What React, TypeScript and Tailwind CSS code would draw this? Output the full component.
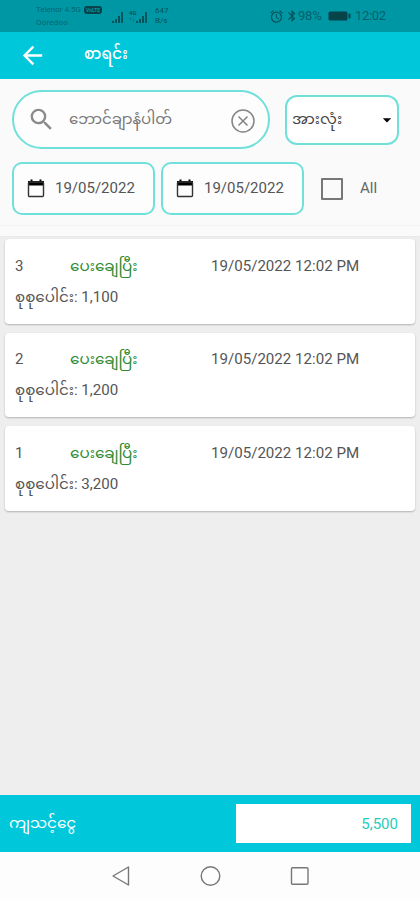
import { useState } from "react";
import {
  MdAlarm,
  MdArrowBack,
  MdArrowDropDown,
  MdBluetooth,
  MdSearch,
} from "react-icons/md";

const vouchers = [
  { id: 3, status: "ပေးချေပြီး", date: "19/05/2022 12:02 PM", total: "1,100" },
  { id: 2, status: "ပေးချေပြီး", date: "19/05/2022 12:02 PM", total: "1,200" },
  { id: 1, status: "ပေးချေပြီး", date: "19/05/2022 12:02 PM", total: "3,200" },
];

const Signal = () => (
  <svg width="12" height="12" viewBox="0 0 12 12" fill="currentColor" className="mt-[2px]">
    <path d="M0 10h2v2H0zM3 8h2v4H3zM6 5h2v7H6zM9 1h2v11H9z" />
  </svg>
);

const CalendarIcon = () => (
  <svg width="18" height="19" viewBox="0 0 18 19">
    <path d="M1 2h16v4.500H1zM3.500 0.500h2v3h-2zM12.500 0.500h2v3h-2z" fill="#000" />
    <rect
      x="1.5"
      y="3"
      width="15"
      height="14.5"
      rx="1"
      fill="none"
      stroke="#333"
      strokeWidth="1.4"
    />
  </svg>
);

const StatusBar = () => (
  <div className="flex h-8 shrink-0 items-center bg-[#0097a5] text-[#07535b]">
    <div className="ml-[36px] w-[76px] text-[8px] leading-[13px]">
      <div className="flex items-center gap-px whitespace-nowrap">
        <span className="w-[47px] opacity-70">Telenor 4.5G</span>
        <span className="rounded-[3px] bg-[#07434a] px-[2px] text-[5px] leading-[8px] font-bold text-[#0097a5]">
          VoLTE
        </span>
      </div>
      <div className="tracking-[0.2px] opacity-70">Ooredoo</div>
    </div>
    <Signal />
    <div className="ml-[5px] w-[7px] text-[6px] leading-[6px] font-bold">
      <div>4G</div>
      <div>↑↓</div>
    </div>
    <Signal />
    <div className="ml-[7px] w-[115px] text-[8px] leading-[10px]">
      <div>647</div>
      <div>B/s</div>
    </div>
    <MdAlarm size={15} className="-ml-px" />
    <MdBluetooth size={14} className="ml-px" />
    <span className="-ml-px w-[28px] text-[13px] tracking-[-0.2px] opacity-80">98%</span>
    <svg className="ml-[2px]" width="23" height="10" viewBox="0 0 23 10">
      <rect x="0.5" y="0.5" width="19" height="9" rx="1.5" fill="#07434a" />
      <rect x="20.5" y="2.5" width="2" height="5" rx="1" fill="#07434a" />
    </svg>
    <span className="ml-[4px] text-[13px] tracking-[-0.3px] opacity-80">12:02</span>
  </div>
);

const DateField = ({ value }: { value: string }) => (
  <button className="flex h-[53px] w-[143px] items-center rounded-[10px] border-2 border-[#70e0db] bg-[#fdfdfd] pl-[13px]">
    <CalendarIcon />
    <span className="ml-[10px] text-[15px] text-[#555]">{value}</span>
  </button>
);

const Filters = () => {
  const [all, setAll] = useState(false);

  return (
    <section className="h-[158px] shrink-0 border-b border-[#eaeaea] bg-[#fafafa] pt-[11px]">
      <div className="h-[136px] border-b border-[#f3f3f3] pl-3">
        <div className="flex items-center">
          <div className="flex h-[59px] w-[258px] items-center rounded-full border-2 border-[#70e0db] bg-[#fdfdfd] pl-[13px]">
            <MdSearch size={29} className="text-[#8b8b8b]" />
            <span className="ml-[13px] w-[160px] text-[15px] whitespace-nowrap text-[#777]">
              ဘောင်ချာနံပါတ်
            </span>
            <svg
              className="mt-[2px] ml-[2px]"
              width="24"
              height="24"
              viewBox="0 0 24 24"
              fill="none"
              stroke="#858585"
              strokeWidth="1.5"
            >
              <circle cx="12" cy="12" r="11" />
              <path d="M7.5 7.5l9 9M16.5 7.5l-9 9" />
            </svg>
          </div>
          <div className="ml-[15px] flex h-[50px] w-[114px] items-center justify-between rounded-xl border-2 border-[#70e0db] bg-white pl-[5px]">
            <span className="text-[15px] text-[#444]">အားလုံး</span>
            <MdArrowDropDown size={20} className="text-black" />
          </div>
        </div>
        <div className="mt-[13px] flex items-center">
          <DateField value="19/05/2022" />
          <div className="w-[6px]" />
          <DateField value="19/05/2022" />
          <button
            aria-label="All"
            className={`ml-[17px] size-[22px] rounded-[1px] border-2 border-[#777] ${all ? "bg-[#777]" : ""}`}
            onClick={() => setAll(!all)}
          />
          <span className="ml-[17px] text-[15px] text-[#666]">All</span>
        </div>
      </div>
    </section>
  );
};

const App = () => {
  return (
    <div className="flex h-[900px] w-[420px] flex-col overflow-hidden bg-[#eeeeee] font-[Roboto,'Noto_Sans_Myanmar','Noto_Sans',sans-serif]">
      <StatusBar />
      <header className="flex h-[47px] shrink-0 items-center bg-[#00c7da] pl-[18px] text-white">
        <MdArrowBack size={29} />
        <h1 className="-mt-px ml-[37px] text-[15.5px] font-medium">စာရင်း</h1>
      </header>
      <Filters />

      {/* Voucher list */}
      <main className="flex flex-1 flex-col gap-[9px] px-[5px] pt-[2px]">
        {vouchers.map((v) => (
          <div
            key={v.id}
            className="h-[84.5px] rounded-[4px] bg-white px-[10px] pt-[15px] text-[15px] text-[#555] shadow-[0_1px_2px_rgba(0,0,0,0.25)]"
          >
            <div className="flex h-6 items-center">
              <span className="w-[55px]">{v.id}</span>
              <span className="w-[141px] text-[15.2px] whitespace-nowrap text-[#2e8b32]">
                {v.status}
              </span>
              <span className="text-[15.1px] whitespace-nowrap">{v.date}</span>
            </div>
            <div className="mt-[7px] flex h-6 items-center text-[15.1px] whitespace-pre">
              <span>စုစုပေါင်း</span>
              <span>: {v.total}</span>
            </div>
          </div>
        ))}
      </main>

      <footer className="flex h-[57px] shrink-0 items-center justify-between bg-[#00c7da] px-[9px] text-white">
        <span className="-mt-px text-[15.2px]">ကျသင့်ငွေ</span>
        <div className="flex h-[39px] w-[175px] items-center justify-end bg-white pt-px pr-[13px] text-[15px] text-[#1fcdbb]">
          5,500
        </div>
      </footer>

      <nav className="flex h-12 shrink-0 items-center bg-[#fdfdfd] pl-[111px]">
        <svg
          width="200"
          height="24"
          viewBox="0 0 200 24"
          fill="none"
          stroke="#777"
          strokeWidth="1.4"
          strokeLinejoin="round"
        >
          <path d="M17.5 3v18L2 12z" />
          <circle cx="99.5" cy="12" r="9.3" />
          <rect x="180.5" y="3.7" width="16.5" height="16.5" rx="1" />
        </svg>
      </nav>
    </div>
  );
};

export default App;
